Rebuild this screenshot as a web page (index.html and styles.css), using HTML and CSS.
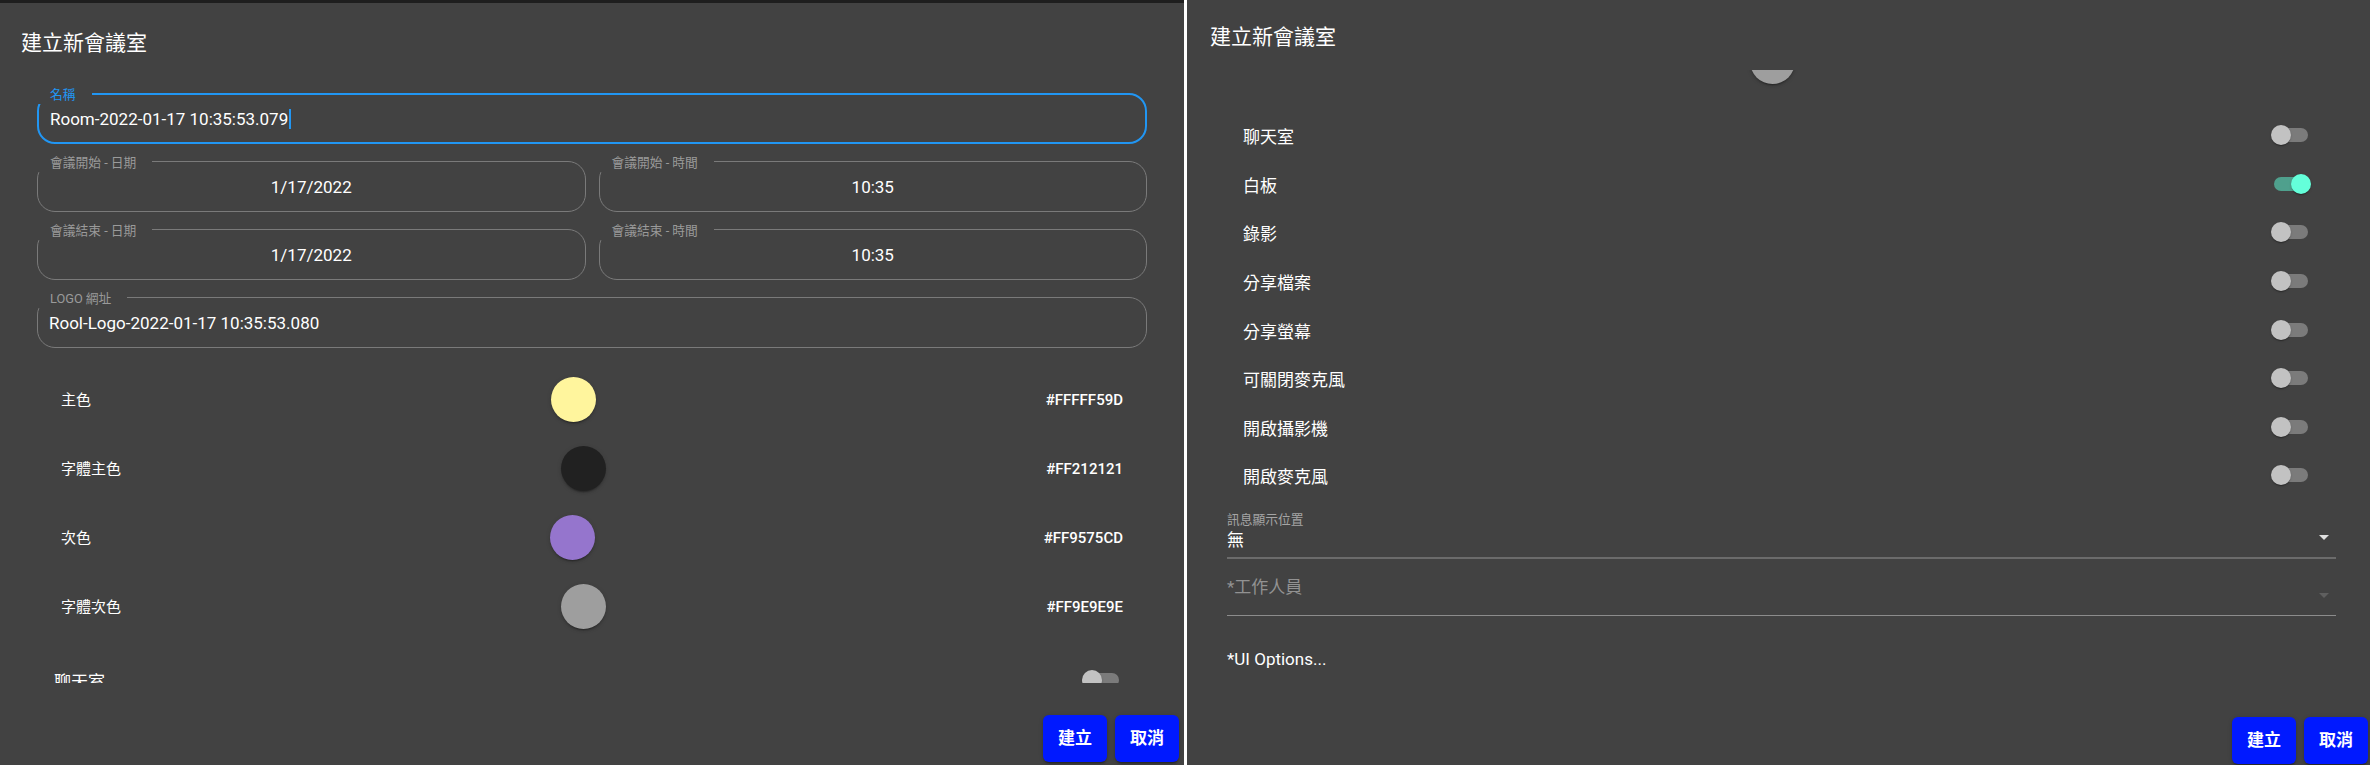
FILE: index.html
```html
<!DOCTYPE html>
<html lang="zh-Hant">
<head>
<meta charset="utf-8">
<title>建立新會議室</title>
<link rel="stylesheet" href="styles.css">
</head>
<body>
<div class="screen">
  <section class="dialog dialog-left">
    <h2 class="dialog-title">建立新會議室</h2>
    <div class="dialog-content">
      <div class="scroll-inner">
        <div class="fields">
          <div class="field field-focused">
            <span class="field-label">名稱</span>
            <span class="field-value">Room-2022-01-17 10:35:53.079</span><span class="caret"></span>
          </div>
          <div class="field-row">
            <div class="field field-center"><span class="field-label">會議開始 - 日期</span><span class="field-value">1/17/2022</span></div>
            <div class="field field-center"><span class="field-label">會議開始 - 時間</span><span class="field-value">10:35</span></div>
          </div>
          <div class="field-row">
            <div class="field field-center"><span class="field-label">會議結束 - 日期</span><span class="field-value">1/17/2022</span></div>
            <div class="field field-center"><span class="field-label">會議結束 - 時間</span><span class="field-value">10:35</span></div>
          </div>
          <div class="field">
            <span class="field-label">LOGO 網址</span>
            <span class="field-value">Rool-Logo-2022-01-17 10:35:53.080</span>
          </div>
        </div>
        <div class="colors">
          <div class="color-row"><span class="color-name">主色</span><span class="swatch swatch-yellow"></span><span class="color-hex">#FFFFF59D</span></div>
          <div class="color-row"><span class="color-name">字體主色</span><span class="swatch swatch-black"></span><span class="color-hex">#FF212121</span></div>
          <div class="color-row"><span class="color-name">次色</span><span class="swatch swatch-purple"></span><span class="color-hex">#FF9575CD</span></div>
          <div class="color-row"><span class="color-name">字體次色</span><span class="swatch swatch-grey"></span><span class="color-hex">#FF9E9E9E</span></div>
        </div>
        <div class="toggles">
          <div class="toggle-row"><span class="toggle-label">聊天室</span><span class="switch"><span class="switch-track"></span><span class="switch-thumb"></span></span></div>
          <div class="toggle-row"><span class="toggle-label">白板</span><span class="switch switch-on"><span class="switch-track"></span><span class="switch-thumb"></span></span></div>
          <div class="toggle-row"><span class="toggle-label">錄影</span><span class="switch"><span class="switch-track"></span><span class="switch-thumb"></span></span></div>
          <div class="toggle-row"><span class="toggle-label">分享檔案</span><span class="switch"><span class="switch-track"></span><span class="switch-thumb"></span></span></div>
          <div class="toggle-row"><span class="toggle-label">分享螢幕</span><span class="switch"><span class="switch-track"></span><span class="switch-thumb"></span></span></div>
          <div class="toggle-row"><span class="toggle-label">可關閉麥克風</span><span class="switch"><span class="switch-track"></span><span class="switch-thumb"></span></span></div>
          <div class="toggle-row"><span class="toggle-label">開啟攝影機</span><span class="switch"><span class="switch-track"></span><span class="switch-thumb"></span></span></div>
          <div class="toggle-row"><span class="toggle-label">開啟麥克風</span><span class="switch"><span class="switch-track"></span><span class="switch-thumb"></span></span></div>
        </div>
        <div class="select">
          <div class="select-label">訊息顯示位置</div>
          <div class="select-input"><span>無</span><svg class="select-icon" viewBox="0 0 24 24"><path d="M7 10l5 5 5-5z"/></svg></div>
        </div>
        <div class="select select-empty">
          <div class="select-input"><span class="placeholder">*工作人員</span><svg class="select-icon" viewBox="0 0 24 24"><path d="M7 10l5 5 5-5z"/></svg></div>
        </div>
        <div class="ui-options">*UI Options...</div>
      </div>
    </div>
    <div class="dialog-actions">
      <button class="btn">建立</button>
      <button class="btn">取消</button>
    </div>
  </section>

  <div class="divider"></div>

  <section class="dialog dialog-right">
    <h2 class="dialog-title">建立新會議室</h2>
    <div class="dialog-content">
      <div class="scroll-inner">
        <div class="fields">
          <div class="field field-focused">
            <span class="field-label">名稱</span>
            <span class="field-value">Room-2022-01-17 10:35:53.079</span><span class="caret"></span>
          </div>
          <div class="field-row">
            <div class="field field-center"><span class="field-label">會議開始 - 日期</span><span class="field-value">1/17/2022</span></div>
            <div class="field field-center"><span class="field-label">會議開始 - 時間</span><span class="field-value">10:35</span></div>
          </div>
          <div class="field-row">
            <div class="field field-center"><span class="field-label">會議結束 - 日期</span><span class="field-value">1/17/2022</span></div>
            <div class="field field-center"><span class="field-label">會議結束 - 時間</span><span class="field-value">10:35</span></div>
          </div>
          <div class="field">
            <span class="field-label">LOGO 網址</span>
            <span class="field-value">Rool-Logo-2022-01-17 10:35:53.080</span>
          </div>
        </div>
        <div class="colors">
          <div class="color-row"><span class="color-name">主色</span><span class="swatch swatch-yellow"></span><span class="color-hex">#FFFFF59D</span></div>
          <div class="color-row"><span class="color-name">字體主色</span><span class="swatch swatch-black"></span><span class="color-hex">#FF212121</span></div>
          <div class="color-row"><span class="color-name">次色</span><span class="swatch swatch-purple"></span><span class="color-hex">#FF9575CD</span></div>
          <div class="color-row"><span class="color-name">字體次色</span><span class="swatch swatch-grey"></span><span class="color-hex">#FF9E9E9E</span></div>
        </div>
        <div class="toggles">
          <div class="toggle-row"><span class="toggle-label">聊天室</span><span class="switch"><span class="switch-track"></span><span class="switch-thumb"></span></span></div>
          <div class="toggle-row"><span class="toggle-label">白板</span><span class="switch switch-on"><span class="switch-track"></span><span class="switch-thumb"></span></span></div>
          <div class="toggle-row"><span class="toggle-label">錄影</span><span class="switch"><span class="switch-track"></span><span class="switch-thumb"></span></span></div>
          <div class="toggle-row"><span class="toggle-label">分享檔案</span><span class="switch"><span class="switch-track"></span><span class="switch-thumb"></span></span></div>
          <div class="toggle-row"><span class="toggle-label">分享螢幕</span><span class="switch"><span class="switch-track"></span><span class="switch-thumb"></span></span></div>
          <div class="toggle-row"><span class="toggle-label">可關閉麥克風</span><span class="switch"><span class="switch-track"></span><span class="switch-thumb"></span></span></div>
          <div class="toggle-row"><span class="toggle-label">開啟攝影機</span><span class="switch"><span class="switch-track"></span><span class="switch-thumb"></span></span></div>
          <div class="toggle-row"><span class="toggle-label">開啟麥克風</span><span class="switch"><span class="switch-track"></span><span class="switch-thumb"></span></span></div>
        </div>
        <div class="select">
          <div class="select-label">訊息顯示位置</div>
          <div class="select-input"><span>無</span><svg class="select-icon" viewBox="0 0 24 24"><path d="M7 10l5 5 5-5z"/></svg></div>
        </div>
        <div class="select select-empty">
          <div class="select-input"><span class="placeholder">*工作人員</span><svg class="select-icon" viewBox="0 0 24 24"><path d="M7 10l5 5 5-5z"/></svg></div>
        </div>
        <div class="ui-options">*UI Options...</div>
      </div>
    </div>
    <div class="dialog-actions">
      <button class="btn">建立</button>
      <button class="btn">取消</button>
    </div>
  </section>
</div>
<script src="script.js"></script>
</body>
</html>
```

FILE: styles.css
```css
html, body {
  margin: 0;
  padding: 0;
  height: 100%;
  overflow: hidden;
  background: #424242;
}

body {
  font-family: Roboto, "Noto Sans CJK TC", sans-serif;
  color: #ffffff;
}

.screen {
  display: flex;
  width: 2370px;
  height: 765px;
  overflow: hidden;
}

.dialog {
  flex: none;
  width: 1184px;
  display: flex;
  flex-direction: column;
  background: #424242;
  box-sizing: border-box;
}

.dialog-left {
  height: 765px;
  border-top: 3px solid #1e1e1e;
}

.dialog-right {
  height: 767px;
  margin-left: 2px;
}

.divider {
  flex: none;
  width: 3px;
  background: #ffffff;
}

.dialog-title {
  flex: none;
  margin: 0;
  font-size: 21px;
  line-height: 21px;
  font-weight: 400;
  padding: 30px 21px 22px;
}

.dialog-right .dialog-title {
  padding-top: 27px;
  padding-bottom: 22px;
}

.dialog-content {
  flex: 1;
  min-height: 0;
  overflow-y: auto;
  scrollbar-width: none;
}

.dialog-content::-webkit-scrollbar {
  display: none;
}

.scroll-inner {
  padding: 17px 37px 40px;
}

/* outlined text fields */
.fields {
  display: flex;
  flex-direction: column;
  gap: 17px;
}

.field-row {
  display: grid;
  grid-template-columns: 1fr 1fr;
  column-gap: 13px;
}

.field {
  position: relative;
  height: 51px;
  box-sizing: border-box;
  border: 1px solid #7a7a7a;
  border-radius: 18px;
  display: flex;
  align-items: center;
  padding: 0 11px;
  font-size: 17px;
  line-height: 20px;
  white-space: nowrap;
}

.field-focused {
  border: 2px solid #2196f3;
}

.field-center {
  justify-content: center;
}

.field-label {
  position: absolute;
  top: -7px;
  left: -2px;
  padding: 0 16px 2px 14px;
  background: #424242;
  font-size: 12.75px;
  line-height: 15px;
  color: #9a9a9a;
  white-space: nowrap;
}

.field-focused .field-label {
  top: -8px;
  left: -3px;
  color: #2196f3;
}

.caret {
  display: inline-block;
  width: 2px;
  height: 20px;
  margin-left: 1px;
  background: #2196f3;
}

/* colour rows */
.colors {
  margin-top: 17px;
  padding: 0 24px;
}

.color-row {
  height: 69px;
  display: flex;
  align-items: center;
  justify-content: space-between;
}

.color-name {
  min-width: 40px;
  font-size: 15px;
  line-height: 20px;
}

.swatch {
  width: 45px;
  height: 45px;
  border-radius: 50%;
  box-shadow: 0 3px 1px -2px rgba(0, 0, 0, 0.2), 0 2px 2px 0 rgba(0, 0, 0, 0.14), 0 1px 5px 0 rgba(0, 0, 0, 0.12);
}

.swatch-yellow { background: #fff59d; }
.swatch-black { background: #212121; }
.swatch-purple { background: #9575cd; }
.swatch-grey { background: #9e9e9e; }

.color-hex {
  font-size: 15px;
  font-weight: 500;
  line-height: 20px;
}

/* switches */
.toggles {
  margin-top: 15px;
}

.toggle-row {
  height: 48.6px;
  display: flex;
  align-items: center;
  justify-content: space-between;
  padding: 0 25px 0 17px;
}

.toggle-label {
  font-size: 17px;
  line-height: 20px;
  margin-top: 4px;
}

.switch {
  position: relative;
  width: 40px;
  height: 20px;
}

.switch-track {
  position: absolute;
  left: 3px;
  top: 3px;
  width: 34px;
  height: 14px;
  border-radius: 7px;
  background: #7b7b7b;
}

.switch-thumb {
  position: absolute;
  left: 0;
  top: 0;
  width: 20px;
  height: 20px;
  border-radius: 50%;
  background: #c2c2c2;
  box-shadow: 0 2px 1px -1px rgba(0, 0, 0, 0.2), 0 1px 1px 0 rgba(0, 0, 0, 0.14), 0 1px 3px 0 rgba(0, 0, 0, 0.12);
}

.switch-on .switch-track {
  background: #4fa08d;
}

.switch-on .switch-thumb {
  left: 20px;
  background: #64ffda;
}

/* selects */
.select {
  margin-top: 12px;
  margin-left: 1px;
}

.select-label {
  font-size: 12.75px;
  line-height: 15px;
  color: #a5a5a5;
}

.select-input {
  position: relative;
  margin-top: 3px;
  height: 29px;
  box-sizing: border-box;
  border-bottom: 2px solid #6b6b6b;
  padding-bottom: 7px;
  font-size: 17px;
  line-height: 20px;
}

.select-icon {
  position: absolute;
  right: 0;
  bottom: 8px;
  width: 24px;
  height: 24px;
  fill: #e0e0e0;
}

.select-empty {
  margin-top: 0;
}

.select-empty .select-input {
  margin-top: 0;
  height: 57px;
  padding: 0;
  display: flex;
  align-items: center;
  border-bottom: 1px solid #8c8c8c;
  color: #929292;
}

.select-empty .select-icon {
  fill: #5f5f5f;
}

.ui-options {
  margin-top: 33px;
  margin-left: 1px;
  font-size: 17px;
  line-height: 20px;
}

/* actions */
.dialog-actions {
  flex: none;
  height: 82px;
  box-sizing: border-box;
  display: flex;
  justify-content: flex-end;
  align-items: flex-start;
  gap: 8px;
  padding: 32px 5px 0 0;
}

.btn {
  width: 64px;
  height: 47px;
  padding: 0;
  border: 0;
  border-radius: 6px;
  background: #0019ff;
  color: #ffffff;
  font-family: Roboto, "Noto Sans CJK TC", sans-serif;
  font-size: 17px;
  font-weight: 700;
  line-height: 1;
  box-shadow: 0 3px 1px -2px rgba(0, 0, 0, 0.2), 0 2px 2px 0 rgba(0, 0, 0, 0.14), 0 1px 5px 0 rgba(0, 0, 0, 0.12);
}
```

FILE: script.js
```js
document.querySelector('.dialog-right .dialog-content').scrollTop = 539;
```
